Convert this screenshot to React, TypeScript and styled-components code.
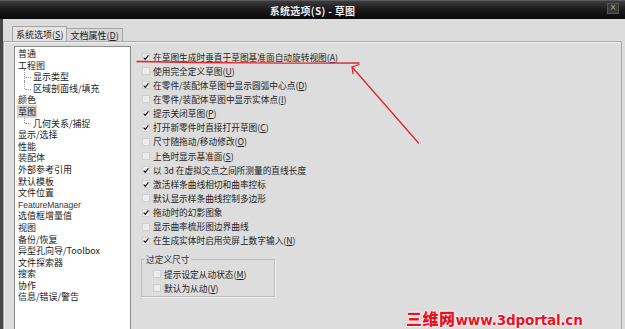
import React from 'react';
import styled, { createGlobalStyle } from 'styled-components';

const GlobalStyle = createGlobalStyle`
	html, body {
		margin: 0;
		padding: 0;
		background: #dcdcdc;
	}
	body {
		font-family: "Noto Sans CJK SC", "Liberation Sans", sans-serif;
		color: #222;
	}
`;

const Window = styled.div`
	position: relative;
	width: 625px;
	height: 329px;
	overflow: hidden;
	display: flex;
	flex-direction: column;
	background: #dcdcdc;
`;

const TitleBar = styled.div`
	height: 19px;
	flex: none;
	display: grid;
	grid-template-columns: 1fr auto 1fr;
	align-items: center;
	background: linear-gradient(#3d3d3d, #1c1c1c 45%, #080808);
	border-top: 1px solid #5a5a5a;
	box-sizing: border-box;
`;

const Title = styled.div`
	grid-column: 2;
	color: #f2f2f2;
	font-size: 10px;
	font-weight: bold;
	letter-spacing: 0.3px;
`;

const CloseButton = styled.div`
	grid-column: 3;
	justify-self: end;
	margin-right: 6px;
	margin-top: -4px;
	width: 10px;
	height: 9px;
	background: #3a3a3a;
	border: 1px solid #555;
	color: #aaa;
	font-size: 8px;
	line-height: 8px;
	text-align: center;
	font-family: "DejaVu Sans", sans-serif;
`;

const Body = styled.div`
	flex: 1;
	display: flex;
	flex-direction: column;
	border-left: 3px solid #464646;
	padding-top: 7px;
	min-height: 0;
`;

const TabRow = styled.div`
	display: flex;
	align-items: flex-end;
	height: 15px;
	padding-left: 9px;
	flex: none;
`;

const Tab = styled.div<{ $active?: boolean }>`
	height: ${(p) => (p.$active ? 15 : 13)}px;
	line-height: ${(p) => (p.$active ? 15 : 13)}px;
	padding: 0 3px;
	font-size: 9px;
	border: 1px solid #a4a4a4;
	border-bottom: none;
	box-sizing: border-box;
	background: ${(p) => (p.$active ? '#e4e4e4' : '#d7d7d7')};
	margin-left: ${(p) => (p.$active ? 0 : -1)}px;
	white-space: nowrap;
`;

const Key = styled.span`
	text-decoration: underline;
`;

const Panel = styled.div`
	flex: 1;
	display: flex;
	gap: 10px;
	margin-right: 3px;
	padding: 4px 0 0 10px;
	border: 1px solid #a9a9a9;
	border-bottom: none;
	box-shadow: inset 1px 1px 0 #f1f1f1;
	background: #dddddd;
	min-height: 0;
`;

const TreeList = styled.div`
	width: 117px;
	flex: none;
	box-sizing: border-box;
	background: #fff;
	border: 1px solid #8a8a8a;
	padding: 1px 0 0 3px;
	margin-bottom: -10px;
`;

const TreeItem = styled.div<{ $level?: number; $last?: boolean }>`
	position: relative;
	height: 11.6px;
	line-height: 11.6px;
	font-size: 9px;
	padding-left: ${(p) => (p.$level ? 15 : 0)}px;
	white-space: nowrap;

	${(p) =>
		p.$level
			? `
		&::before {
			content: '';
			position: absolute;
			left: 6px;
			top: -2px;
			height: ${p.$last ? 'calc(50% + 2px)' : 'calc(100% + 2px)'};
			border-left: 1px dotted #9a9a9a;
		}
		&::after {
			content: '';
			position: absolute;
			left: 7px;
			top: 50%;
			width: 6px;
			border-top: 1px dotted #9a9a9a;
		}
	`
			: ''}
`;

const ItemText = styled.span<{ $selected?: boolean; $latin?: boolean }>`
	padding: 0 1px;
	margin-left: -1px;
	background: ${(p) => (p.$selected ? '#d6d6d6' : 'transparent')};
	font-family: ${(p) => (p.$latin ? '"Liberation Sans", sans-serif' : 'inherit')};
	font-size: ${(p) => (p.$latin ? '8.5px' : 'inherit')};
	color: ${(p) => (p.$latin ? '#333' : 'inherit')};
`;

const Options = styled.div`
	display: flex;
	flex-direction: column;
	padding-top: 4px;
`;

const Row = styled.div`
	display: flex;
	align-items: center;
	gap: 3px;
	height: 14.15px;
	font-size: 8.7px;
	white-space: nowrap;
	padding-left: 1px;
`;

const Box = styled.div`
	width: 8px;
	height: 8px;
	flex: none;
	box-sizing: border-box;
	background: #ececec;
	border: 1px solid #d0d0d0;
	display: flex;
	align-items: center;
	justify-content: center;
`;

const Group = styled.fieldset`
	width: 134px;
	box-sizing: border-box;
	margin: 6px 0 0 0;
	padding: 1.5px 0 0.5px 2px;
	border: 1px solid #bdbdbd;
	box-shadow: 1px 1px 0 #efefef;
`;

const GroupLegend = styled.legend`
	padding: 0 2px;
	font-size: 8.7px;
	line-height: 12px;
	color: #333;
`;

const GroupRows = styled.div`
	display: flex;
	flex-direction: column;
	padding-left: 8px;

	${Row} {
		height: 14px;
	}
`;

const Overlay = styled.svg`
	position: absolute;
	left: 0;
	top: 0;
	pointer-events: none;
`;

const Watermark = styled.div`
	position: absolute;
	left: 406px;
	top: 306px;
	display: flex;
	align-items: baseline;
	color: #e8121c;
	font-weight: bold;
	white-space: nowrap;
	text-shadow: 1px 0 0 #fff, -1px 0 0 #fff, 0 1px 0 #fff, 0 -1px 0 #fff, 1px 1px 0 #fbd, -1px -1px 0 #fbd, 1px -1px 0 #fbd, -1px 1px 0 #fbd;
`;

const WatermarkCn = styled.span`
	font-family: "Noto Sans CJK SC", sans-serif;
	font-size: 16px;
	font-weight: 900;
	letter-spacing: 0.5px;
`;

const WatermarkUrl = styled.span`
	font-family: "DejaVu Sans", sans-serif;
	font-size: 13.6px;
	letter-spacing: -0.2px;
`;

const Check = () => (
	<svg width="7" height="7" viewBox="0 0 7 7">
		<path d="M0.8 3.6 L2.7 5.6 L6.3 1" fill="none" stroke="#151515" strokeWidth="1.4" />
	</svg>
);

const Option: React.FC<{ text: string; k?: string; checked?: boolean }> = ({ text, k, checked }) => (
	<Row>
		<Box>{checked && <Check />}</Box>
		<span>
			{text}
			{k && (
				<>
					(<Key>{k}</Key>)
				</>
			)}
		</span>
	</Row>
);

const tree = [
	{ t: '普通' },
	{ t: '工程图' },
	{ t: '显示类型', level: 1 },
	{ t: '区域剖面线/填充', level: 1, last: true },
	{ t: '颜色' },
	{ t: '草图', selected: true },
	{ t: '几何关系/捕捉', level: 1, last: true },
	{ t: '显示/选择' },
	{ t: '性能' },
	{ t: '装配体' },
	{ t: '外部参考引用' },
	{ t: '默认模板' },
	{ t: '文件位置' },
	{ t: 'FeatureManager', latin: true },
	{ t: '选值框增量值' },
	{ t: '视图' },
	{ t: '备份/恢复' },
	{ t: '异型孔向导/Toolbox' },
	{ t: '文件探索器' },
	{ t: '搜索' },
	{ t: '协作' },
	{ t: '信息/错误/警告' },
];

const options = [
	{ t: '在草图生成时垂直于草图基准面自动旋转视图', k: 'A', c: true },
	{ t: '使用完全定义草图', k: 'U', c: false },
	{ t: '在零件/装配体草图中显示圆弧中心点', k: 'D', c: true },
	{ t: '在零件/装配体草图中显示实体点', k: 'I', c: false },
	{ t: '提示关闭草图', k: 'P', c: true },
	{ t: '打开新零件时直接打开草图', k: 'C', c: true },
	{ t: '尺寸随拖动/移动修改', k: 'O', c: false },
	{ t: '上色时显示基准面', k: 'S', c: false },
	{ t: '以 3d 在虚拟交点之间所测量的直线长度', c: true },
	{ t: '激活样条曲线相切和曲率控标', c: true },
	{ t: '默认显示样条曲线控制多边形', c: false },
	{ t: '拖动时的幻影图象', c: true },
	{ t: '显示曲率梳形图边界曲线', c: false },
	{ t: '在生成实体时启用荧屏上数字输入', k: 'N', c: true },
];

const App: React.FC = () => (
	<>
		<GlobalStyle />
		<Window>
			<TitleBar>
				<Title>系统选项(S) - 草图</Title>
				<CloseButton>×</CloseButton>
			</TitleBar>
			<Body>
				<TabRow>
					<Tab $active>
						系统选项(<Key>S</Key>)
					</Tab>
					<Tab>
						文档属性(<Key>D</Key>)
					</Tab>
				</TabRow>
				<Panel>
					<TreeList>
						{tree.map((item) => (
							<TreeItem key={item.t} $level={item.level} $last={item.last}>
								<ItemText $selected={item.selected} $latin={item.latin}>
									{item.t}
								</ItemText>
							</TreeItem>
						))}
					</TreeList>
					<Options>
						{options.map((o) => (
							<Option key={o.t} text={o.t} k={o.k} checked={o.c} />
						))}
						<Group>
							<GroupLegend>过定义尺寸</GroupLegend>
							<GroupRows>
								<Option text="提示设定从动状态" k="M" />
								<Option text="默认为从动" k="V" />
							</GroupRows>
						</Group>
					</Options>
				</Panel>
			</Body>
			<Overlay width="625" height="329" viewBox="0 0 625 329">
				<g fill="none" stroke="#e2262b" strokeWidth="1.3" strokeLinecap="round">
					<path d="M137 61.5 Q 250 63.5 359 63" />
					<path d="M352 67 L359 64.5 M352 67 L353 73.5 M352.5 67.5 L418.5 143" />
				</g>
			</Overlay>
			<Watermark>
				<WatermarkCn>三维网</WatermarkCn>
				<WatermarkUrl>www.3dportal.cn</WatermarkUrl>
			</Watermark>
		</Window>
	</>
);

export default App;
